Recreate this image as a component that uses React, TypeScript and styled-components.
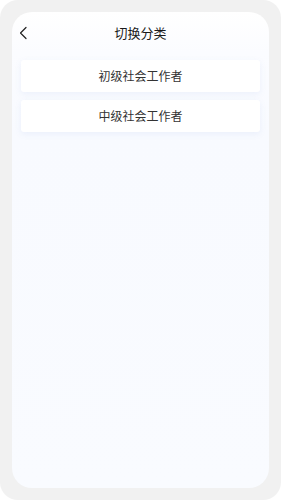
import React from 'react';
import styled, { createGlobalStyle } from 'styled-components';

const GlobalStyle = createGlobalStyle`
  html, body {
    margin: 0;
    padding: 0;
    background: #ffffff;
  }
  * {
    box-sizing: border-box;
  }
`;

const Frame = styled.div`
  width: 281px;
  height: 500px;
  padding: 12px;
  background: #f1f1f1;
  border-radius: 18px;
  font-family: "Noto Sans CJK SC", "Noto Sans", sans-serif;
`;

const Screen = styled.div`
  height: 100%;
  border-radius: 20px;
  background: linear-gradient(180deg, #ffffff 0px, #fbfcff 40px, #f8faff 120px, #f9fbff 100%);
  display: flex;
  flex-direction: column;
  overflow: hidden;
`;

const Header = styled.div`
  height: 44px;
  display: grid;
  grid-template-columns: 40px 1fr 40px;
  align-items: center;
  padding-bottom: 3px;
`;

const BackButton = styled.button`
  border: none;
  background: none;
  padding: 0 0 0 6px;
  display: flex;
  align-items: center;
  cursor: pointer;
`;

const Title = styled.h1`
  margin: 0;
  text-align: center;
  font-size: 13px;
  font-weight: 400;
  color: #1a1a1a;
`;

const List = styled.div`
  display: flex;
  flex-direction: column;
  gap: 8px;
  padding: 4px 9px 0 9px;
`;

const Item = styled.div`
  height: 32px;
  background: #ffffff;
  border-radius: 3px;
  box-shadow: 0 2px 6px rgba(120, 150, 220, 0.1);
  display: flex;
  align-items: center;
  justify-content: center;
  font-size: 12px;
  color: #333333;
  padding-bottom: 1px;
  cursor: pointer;
`;

const categories = ['初级社会工作者', '中级社会工作者'];

const App = () => {
  return (
    <>
      <GlobalStyle />
      <Frame>
        <Screen>
          <Header>
            <BackButton aria-label="返回">
              <svg width="12" height="14" viewBox="0 0 12 14" fill="none">
                <path d="M8 1.5L2.5 7L8 12.5" stroke="#222" strokeWidth="1.2" strokeLinecap="round" strokeLinejoin="round" />
              </svg>
            </BackButton>
            <Title>切换分类</Title>
            <span />
          </Header>
          <List>
            {categories.map((c) => (
              <Item key={c}>{c}</Item>
            ))}
          </List>
        </Screen>
      </Frame>
    </>
  );
};

export default App;
